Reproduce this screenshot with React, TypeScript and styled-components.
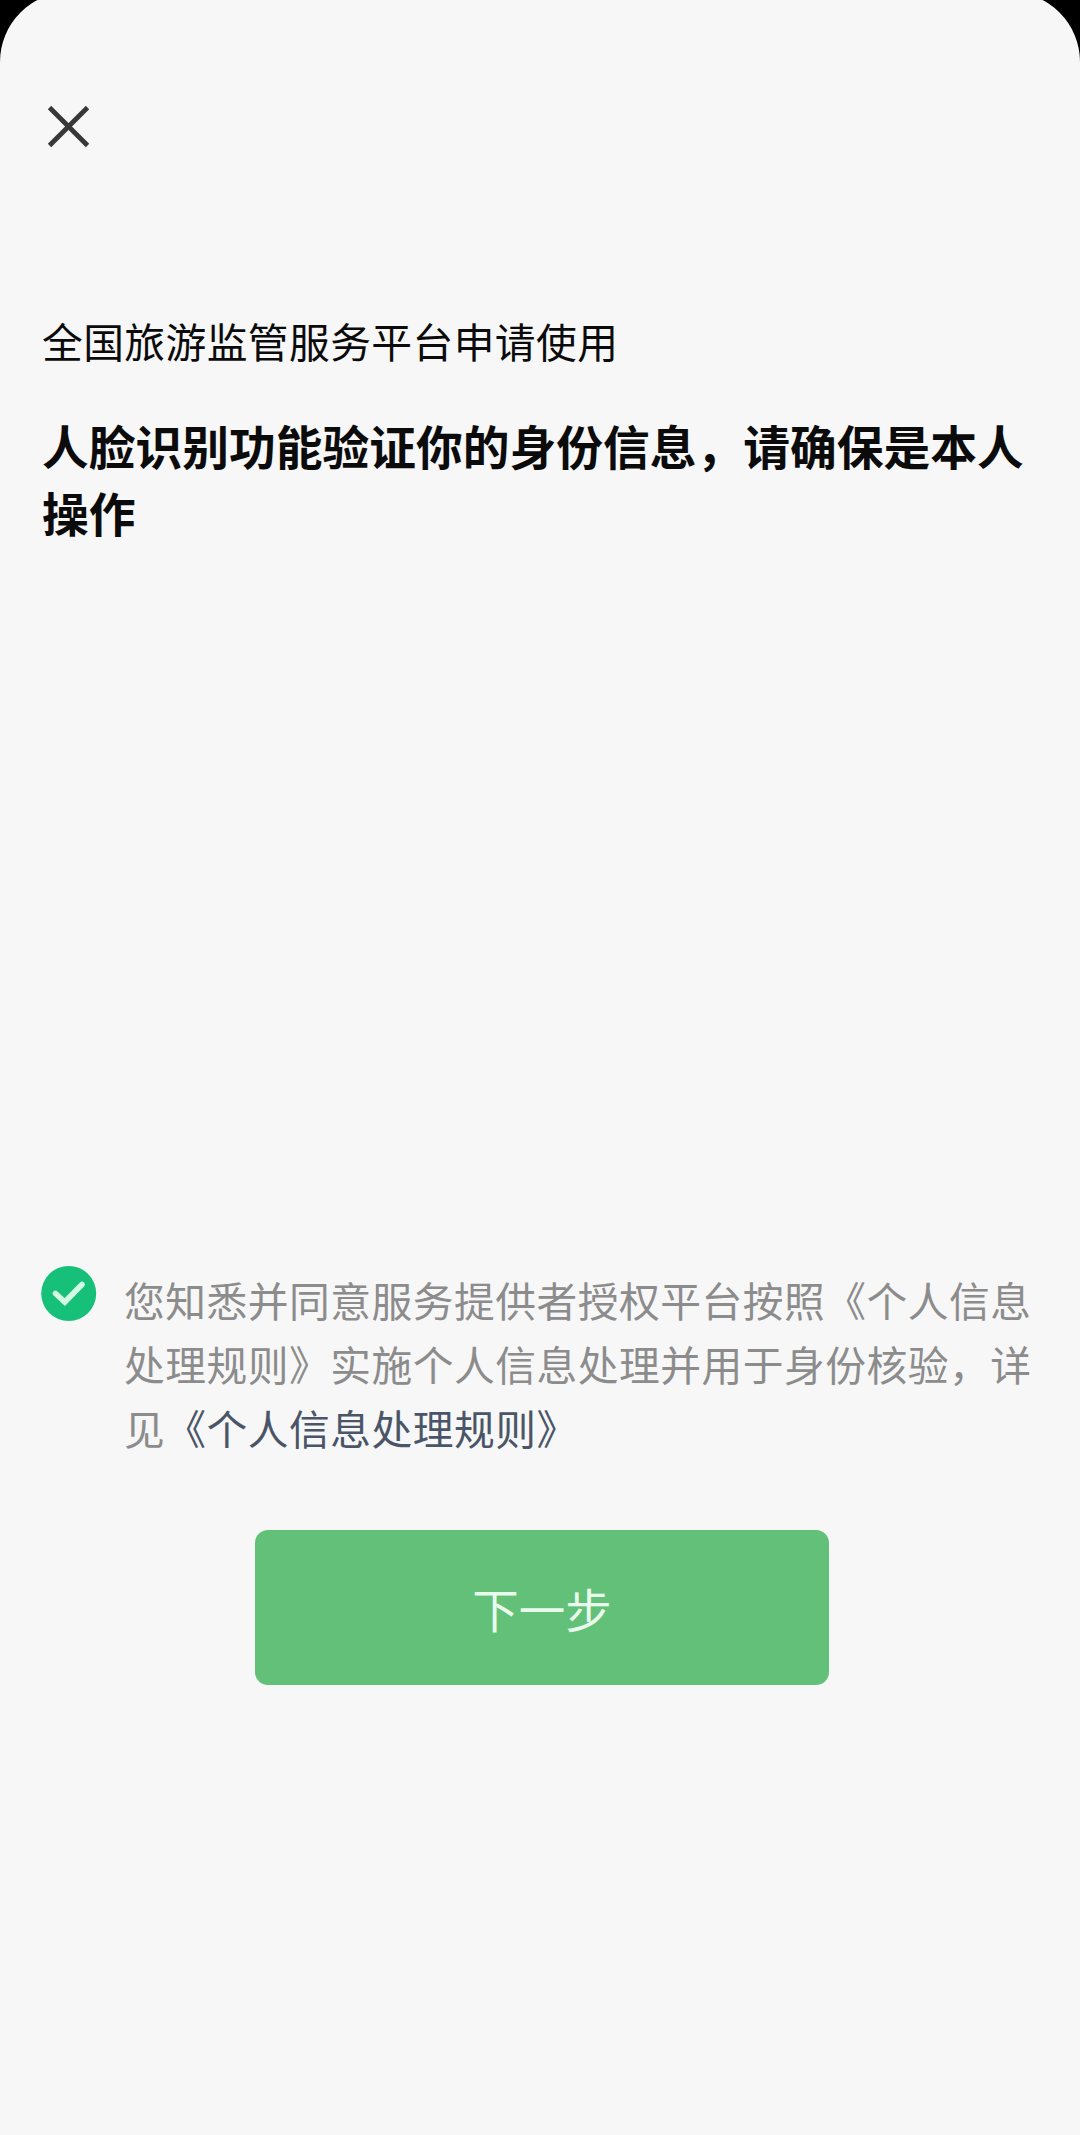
import React from "react";
import styled, { createGlobalStyle } from "styled-components";

const GlobalStyle = createGlobalStyle`
  * { box-sizing: border-box; }
  html, body { margin: 0; padding: 0; background: #000; }
  body { overflow: hidden; }
`;

const Viewport = styled.div`
  width: 1080px;
  height: 2135px;
  overflow: hidden;
  background: #000;
  display: flex;
  flex-direction: column;
`;

const Sheet = styled.main`
  flex: none;
  width: 1080px;
  height: 2143px;
  margin-top: -8px;
  padding: 114px 37px 0 41px;
  border-radius: 70px 70px 0 0;
  background: #f7f7f7;
  color: #0b0b0b;
  font-family: "Noto Sans CJK SC", "Noto Sans", sans-serif;
  display: flex;
  flex-direction: column;
`;

const CloseButton = styled.button`
  width: 42px;
  height: 42px;
  margin-left: 6px;
  padding: 0;
  border: 0;
  background: none;
  svg { display: block; }
`;

const Requester = styled.p`
  margin: 161px 0 0 1px;
  font-size: 40.75px;
  letter-spacing: 0.42px;
  line-height: 64px;
  height: 64px;
`;

const Title = styled.h1`
  margin: 38px 0 0 1px;
  width: 990px;
  height: 134px;
  font-size: 46.75px;
  font-weight: 700;
  line-height: 67px;
`;

const Agreement = styled.div`
  display: flex;
  gap: 28px;
  margin-top: 721px;
`;

const Tick = styled.svg`
  flex: none;
  width: 56px;
  height: 56px;
`;

const Terms = styled.p`
  margin: 2px 0 0 -1px;
  width: 912px;
  font-size: 40.75px;
  letter-spacing: 0.5px;
  line-height: 64.2px;
  color: #8c8c8c;
`;

const TermsLink = styled.a`
  color: #4a5568;
`;

const NextButton = styled.button`
  align-self: center;
  width: 574px;
  height: 155px;
  margin-top: 69px;
  padding: 0;
  border: 0;
  border-radius: 13px;
  background: #62c079;
  color: #e9fbec;
  font: 400 46.5px/1.4 "Noto Sans CJK SC", sans-serif;
`;

export default function App() {
  return (
    <Viewport>
      <GlobalStyle />
      <Sheet>
        <CloseButton aria-label="关闭">
          <svg width="42" height="42" viewBox="0 0 42 42" fill="none" stroke="#383838" strokeWidth="4.8">
            <path d="M2.5 1.5 40.5 39.5M40.5 1.5 2.5 39.5" />
          </svg>
        </CloseButton>
        <Requester>全国旅游监管服务平台申请使用</Requester>
        <Title>人脸识别功能验证你的身份信息，请确保是本人操作</Title>
        <Agreement>
          <Tick viewBox="0 0 56 56" fill="none">
            <circle cx="27.7" cy="27.5" r="27.5" fill="#17c079" />
            <path d="M14.5 27.5 23.8 36 41 18.5" stroke="#d3fbe3" strokeWidth="5.6" strokeLinecap="round" strokeLinejoin="miter" />
          </Tick>
          <Terms>
            您知悉并同意服务提供者授权平台按照《个人信息处理规则》实施个人信息处理并用于身份核验，详见<TermsLink>《个人信息处理规则》</TermsLink>
          </Terms>
        </Agreement>
        <NextButton>下一步</NextButton>
      </Sheet>
    </Viewport>
  );
}
